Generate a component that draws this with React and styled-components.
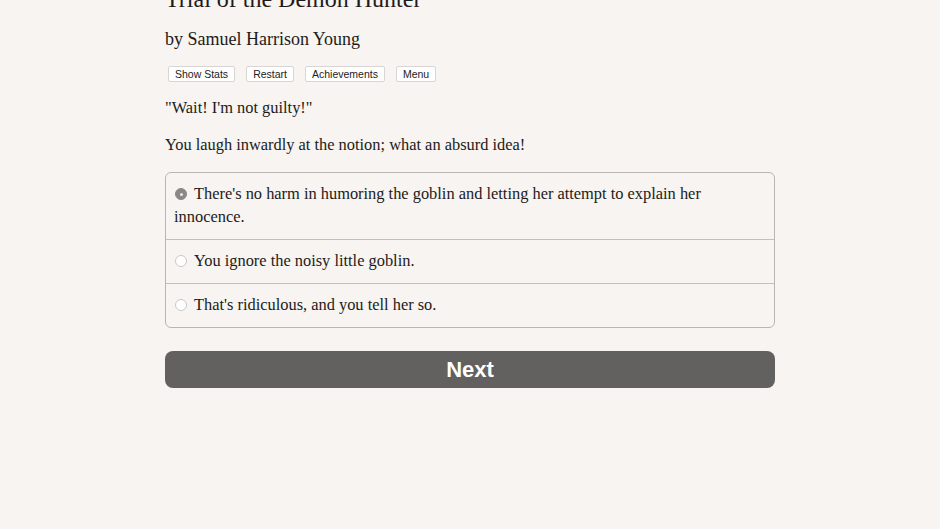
import React, { useState } from 'react';
import styled, { createGlobalStyle } from 'styled-components';

const GlobalStyle = createGlobalStyle`
	html, body {
		margin: 0;
		padding: 0;
		background: #f7f4f1;
		height: 100%;
		overflow: hidden;
	}
`;

const Page = styled.div`
	width: 940px;
	height: 529px;
	background: #f7f4f1;
	color: #1d1b1a;
	font-family: "Liberation Serif", "Times New Roman", serif;
	overflow: hidden;
`;

const Column = styled.div`
	width: 610px;
	margin: -16px 0 0 165px;
	display: flex;
	flex-direction: column;
`;

const Title = styled.h1`
	margin: 0;
	font-size: 24px;
	font-weight: normal;
	line-height: 30px;
`;

const Author = styled.h2`
	margin: 13px 0 0;
	font-size: 18px;
	font-weight: normal;
	line-height: 24px;
`;

const Toolbar = styled.div`
	display: flex;
	gap: 11px;
	margin: 15px 0 0 3px;
`;

const ToolButton = styled.button`
	font-family: "Liberation Sans", Arial, sans-serif;
	font-size: 10.5px;
	height: 16px;
	padding: 0 6px;
	background: #ffffff;
	border: 1px solid #d8d5d2;
	border-radius: 2px;
	color: #222;
	line-height: 14px;
`;

const Paragraph = styled.p`
	margin: ${p => p.$top}px 0 0;
	font-size: 16.4px;
	line-height: 20px;
`;

const ChoiceList = styled.div`
	margin-top: 17px;
	border: 1px solid #b8b5b3;
	border-radius: 6px;
	overflow: hidden;
`;

const Choice = styled.label`
	display: block;
	padding: 9px 20px 11px 8px;
	font-size: 16.4px;
	line-height: 23px;
	border-top: ${p => (p.$first ? 'none' : '1px solid #c2bfbc')};
	cursor: pointer;
`;

const Radio = styled.span`
	display: inline-block;
	width: 12px;
	height: 12px;
	border-radius: 50%;
	margin: 0 7px 0 1px;
	vertical-align: -1px;
	box-sizing: border-box;
	background: ${p => (p.$checked ? '#8a8886' : '#ffffff')};
	border: 1px solid ${p => (p.$checked ? '#8a8886' : '#cbc8c6')};
	position: relative;

	&::after {
		content: '';
		display: ${p => (p.$checked ? 'block' : 'none')};
		position: absolute;
		left: 3.5px;
		top: 3.5px;
		width: 3px;
		height: 3px;
		border-radius: 50%;
		background: #e8e6e4;
	}
`;

const NextButton = styled.button`
	margin-top: 23px;
	height: 37px;
	border: none;
	border-radius: 8px;
	background: #636160;
	color: #ffffff;
	font-family: "Liberation Sans", Arial, sans-serif;
	font-weight: bold;
	font-size: 22px;
	cursor: pointer;
`;

const choices = [
	"There's no harm in humoring the goblin and letting her attempt to explain her innocence.",
	'You ignore the noisy little goblin.',
	"That's ridiculous, and you tell her so.",
];

const App = () => {
	const [selected, setSelected] = useState(0);

	return (
		<Page>
			<GlobalStyle />
			<Column>
				<Title>Trial of the Demon Hunter</Title>
				<Author>by Samuel Harrison Young</Author>
				<Toolbar>
					<ToolButton>Show Stats</ToolButton>
					<ToolButton>Restart</ToolButton>
					<ToolButton>Achievements</ToolButton>
					<ToolButton>Menu</ToolButton>
				</Toolbar>
				<Paragraph $top={16}>"Wait! I'm not guilty!"</Paragraph>
				<Paragraph $top={17}>You laugh inwardly at the notion; what an absurd idea!</Paragraph>
				<ChoiceList>
					{choices.map((text, i) => (
						<Choice key={i} $first={i === 0} onClick={() => setSelected(i)}>
							<Radio $checked={selected === i} />
							{text}
						</Choice>
					))}
				</ChoiceList>
				<NextButton>Next</NextButton>
			</Column>
		</Page>
	);
};

export default App;
